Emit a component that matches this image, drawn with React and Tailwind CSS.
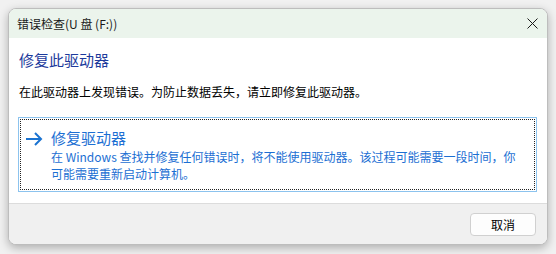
export default function App() {
  const font = { fontFamily: '"Noto Sans CJK SC", "Noto Sans", sans-serif' };
  return (
    <div className="w-[556px] h-[254px] bg-[#f1f1f1] pt-[8px] pl-[8px] overflow-hidden" style={font}>
      <div className="w-[540px] h-[237px] rounded-[8px] border border-[#bdbdbd] bg-white overflow-hidden flex flex-col shadow-[0_3px_10px_rgba(0,0,0,0.28)]">
        {/* title bar */}
        <div className="h-[29px] shrink-0 bg-[#ebf4ec] flex items-center justify-between pl-[8px] pr-[9px]">
          <span className="text-[12px] leading-[16px] text-[#1a1a1a]">错误检查(U 盘 (F:))</span>
          <svg width="11" height="11" viewBox="0 0 11 11">
            <path d="M0.5 0.5L10.5 10.5M10.5 0.5L0.5 10.5" stroke="#1a1a1a" strokeWidth="1" />
          </svg>
        </div>
        {/* content */}
        <div className="flex-1 bg-white pl-[9px] pr-[10px] pt-[12px]">
          <div className="pl-[1px] text-[15px] leading-[20px] text-[#1c3a9c]">修复此驱动器</div>
          <div className="pl-[1px] mt-[14px] text-[12px] leading-[16px] text-black">
            在此驱动器上发现错误。为防止数据丢失，请立即修复此驱动器。
          </div>
          <div className="mt-[17px] border border-[#8cc3ee] p-[1px]">
            <div className="border border-dotted border-[#222] flex pt-[8px] pb-[7px] pl-[4px]">
              <svg width="18" height="14" viewBox="0 0 18 14" className="mt-[4px] shrink-0">
                <path d="M1 7H16M10 1L16 7L10 13" stroke="#1a73d1" strokeWidth="2" fill="none" />
              </svg>
              <div className="ml-[8px] text-[#1c6fd3]">
                <div className="text-[15px] leading-[20px]">修复驱动器</div>
                <div className="text-[12px] leading-[17px] w-[476px]">
                  在 Windows 查找并修复任何错误时，将不能使用驱动器。该过程可能需要一段时间，你<br />可能需要重新启动计算机。
                </div>
              </div>
            </div>
          </div>
        </div>
        {/* footer */}
        <div className="h-[41px] shrink-0 bg-[#f0f0f0] border-t border-[#dcdcdc] flex items-start justify-end pr-[11px] pt-[9px]">
          <button className="w-[66px] h-[23px] rounded-[4px] border border-[#d0d0d0] bg-[#fdfdfd] text-[12px] leading-[16px] text-black">
            取消
          </button>
        </div>
      </div>
    </div>
  );
}
